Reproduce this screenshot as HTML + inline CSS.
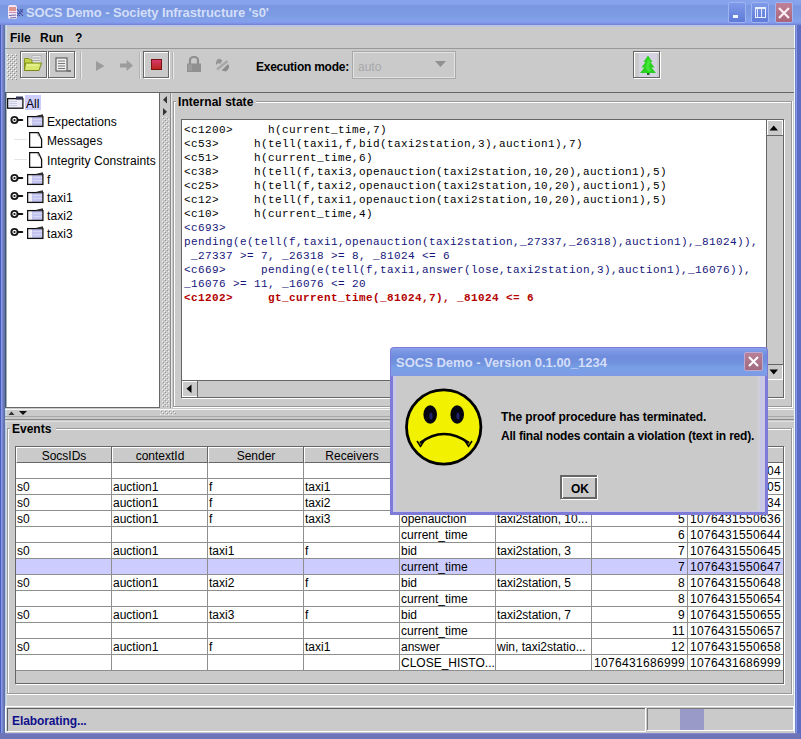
<!DOCTYPE html>
<html><head><meta charset="utf-8">
<style>
*{margin:0;padding:0;box-sizing:border-box}
html,body{width:801px;height:739px;overflow:hidden;background:#cacaca;font-family:"Liberation Sans",sans-serif;font-size:12px;color:#000;position:relative}
.a{position:absolute}
.t{line-height:14px;white-space:pre}
.b{font-weight:bold}
.m{font-family:"Liberation Mono",monospace;font-size:11px;line-height:14px;letter-spacing:0.4px;white-space:pre}
.title{left:26px;top:5px;font-weight:bold;font-size:13px;line-height:16px;color:#d4def8;letter-spacing:-0.1px;white-space:pre}
.dtitle{left:396px;top:355px;font-weight:bold;font-size:13px;line-height:16px;color:#d4def8;white-space:pre}
</style></head><body>
<div class="a" style="left:0;top:0;width:801px;height:25px;background:linear-gradient(#88a4ec 0px,#86a2ec 4px,#7a96e0 6px,#7b98e3 9px,#7b9be2 16px,#7fa0e6 18px,#869ff0 22px,#7a8ee0 24px,#6f80cc 25px)"></div>
<div class="a" style="left:0px;top:25px;width:801px;height:2px;background:#bcc4e6;"></div>
<div class="a" style="left:0px;top:25px;width:1px;height:714px;background:#4a5cbc;"></div>
<div class="a" style="left:1px;top:25px;width:1px;height:714px;background:#8898e8;"></div>
<div class="a" style="left:2px;top:25px;width:1px;height:714px;background:#7888d0;"></div>
<div class="a" style="left:3px;top:25px;width:1px;height:714px;background:#6a7ab8;"></div>
<div class="a" style="left:4px;top:25px;width:1px;height:714px;background:#6272a8;"></div>
<div class="a" style="left:5px;top:25px;width:1px;height:708px;background:#b8cce0;"></div>
<div class="a" style="left:6px;top:25px;width:1px;height:708px;background:#d0dce4;"></div>
<div class="a" style="left:794px;top:25px;width:1px;height:708px;background:#eef8ff;"></div>
<div class="a" style="left:795px;top:25px;width:1px;height:708px;background:#7080c8;"></div>
<div class="a" style="left:796px;top:25px;width:1px;height:714px;background:#8898e8;"></div>
<div class="a" style="left:797px;top:25px;width:4px;height:714px;background:#5a6cc4;"></div>
<div class="a" style="left:0px;top:733px;width:800px;height:6px;background:#6e74b8;"></div>
<div class="a" style="left:5px;top:733px;width:791px;height:1px;background:#8a86cc;"></div>
<svg class="a" style="left:6px;top:3px" width="20" height="19" viewBox="0 0 20 19">
<rect x="2" y="2" width="9" height="14" rx="2" fill="#f2e4f4"/>
<path d="M3 5 L10 5 M3 7 L10 7" stroke="#d87a70" stroke-width="1.4"/>
<path d="M3 9.5 L10 9.5" stroke="#c890b8" stroke-width="1"/>
<path d="M3 12.5 L10 12 M4 15 L10 14.5" stroke="#6a6aa8" stroke-width="1.2"/>
<path d="M11 6 L17 13 M17 6 L11 13 M14 6 L17 9.5 M11 9.5 L14 13" stroke="#48509a" stroke-width="1.1"/>
</svg>
<div class="a title">SOCS Demo - Society Infrastructure 's0'</div>
<div class="a" style="left:728px;top:2px;width:18px;height:21px;background:linear-gradient(#7f9ae8,#5f7ad8);border:1px solid #9fb4f0;border-radius:2px"></div>
<div class="a" style="left:751px;top:2px;width:18px;height:21px;background:linear-gradient(#7f9ae8,#5f7ad8);border:1px solid #9fb4f0;border-radius:2px"></div>
<div class="a" style="left:775px;top:2px;width:18px;height:21px;background:linear-gradient(#c08098,#a86478);border:1px solid #9fb4f0;border-radius:2px"></div>
<div class="a" style="left:733px;top:15px;width:5px;height:3px;background:#f0f4ff"></div>
<div class="a" style="left:755px;top:7px;width:11px;height:11px;border:1px solid #e8f0ff;border-top-width:2px"></div>
<div class="a" style="left:757px;top:9px;width:1px;height:8px;background:#dfe8ff"></div>
<div class="a" style="left:761px;top:9px;width:1px;height:8px;background:#dfe8ff"></div>
<svg class="a" style="left:775px;top:2px" width="18" height="21"><path d="M4 6 L14 16 M14 6 L4 16" stroke="#fbeef2" stroke-width="2.2"/></svg>
<div class="a t b" style="left:10px;top:31px;">File</div>
<div class="a t b" style="left:40px;top:31px;">Run</div>
<div class="a t b" style="left:75px;top:31px;">?</div>
<div class="a" style="left:5px;top:48px;width:790px;height:1px;background:#999999;"></div>
<svg class="a" style="left:7px;top:54px" width="10" height="26" shape-rendering="crispEdges"><defs><pattern id="bp1" width="4" height="4" patternUnits="userSpaceOnUse"><rect x="0" y="0" width="1" height="1" fill="#ffffff"/><rect x="2" y="2" width="1" height="1" fill="#ffffff"/><rect x="1" y="1" width="1" height="1" fill="#888888"/><rect x="3" y="3" width="1" height="1" fill="#888888"/></pattern></defs><rect width="10" height="26" fill="url(#bp1)"/></svg>
<div class="a" style="left:21px;top:52px;width:27px;height:1px;background:#ffffff;"></div>
<div class="a" style="left:21px;top:78px;width:27px;height:1px;background:#ffffff;"></div>
<div class="a" style="left:21px;top:52px;width:1px;height:27px;background:#ffffff;"></div>
<div class="a" style="left:47px;top:52px;width:1px;height:27px;background:#ffffff;"></div>
<div class="a" style="left:20px;top:51px;width:27px;height:1px;background:#666666;"></div>
<div class="a" style="left:20px;top:77px;width:27px;height:1px;background:#666666;"></div>
<div class="a" style="left:20px;top:51px;width:1px;height:27px;background:#666666;"></div>
<div class="a" style="left:46px;top:51px;width:1px;height:27px;background:#666666;"></div>
<div class="a" style="left:49px;top:52px;width:27px;height:1px;background:#ffffff;"></div>
<div class="a" style="left:49px;top:78px;width:27px;height:1px;background:#ffffff;"></div>
<div class="a" style="left:49px;top:52px;width:1px;height:27px;background:#ffffff;"></div>
<div class="a" style="left:75px;top:52px;width:1px;height:27px;background:#ffffff;"></div>
<div class="a" style="left:48px;top:51px;width:27px;height:1px;background:#666666;"></div>
<div class="a" style="left:48px;top:77px;width:27px;height:1px;background:#666666;"></div>
<div class="a" style="left:48px;top:51px;width:1px;height:27px;background:#666666;"></div>
<div class="a" style="left:74px;top:51px;width:1px;height:27px;background:#666666;"></div>
<div class="a" style="left:144px;top:52px;width:26px;height:1px;background:#ffffff;"></div>
<div class="a" style="left:144px;top:78px;width:26px;height:1px;background:#ffffff;"></div>
<div class="a" style="left:144px;top:52px;width:1px;height:27px;background:#ffffff;"></div>
<div class="a" style="left:169px;top:52px;width:1px;height:27px;background:#ffffff;"></div>
<div class="a" style="left:143px;top:51px;width:26px;height:1px;background:#666666;"></div>
<div class="a" style="left:143px;top:77px;width:26px;height:1px;background:#666666;"></div>
<div class="a" style="left:143px;top:51px;width:1px;height:27px;background:#666666;"></div>
<div class="a" style="left:168px;top:51px;width:1px;height:27px;background:#666666;"></div>
<div class="a" style="left:634px;top:52px;width:27px;height:1px;background:#ffffff;"></div>
<div class="a" style="left:634px;top:78px;width:27px;height:1px;background:#ffffff;"></div>
<div class="a" style="left:634px;top:52px;width:1px;height:27px;background:#ffffff;"></div>
<div class="a" style="left:660px;top:52px;width:1px;height:27px;background:#ffffff;"></div>
<div class="a" style="left:633px;top:51px;width:27px;height:1px;background:#666666;"></div>
<div class="a" style="left:633px;top:77px;width:27px;height:1px;background:#666666;"></div>
<div class="a" style="left:633px;top:51px;width:1px;height:27px;background:#666666;"></div>
<div class="a" style="left:659px;top:51px;width:1px;height:27px;background:#666666;"></div>
<div class="a" style="left:80px;top:52px;width:1px;height:27px;background:#b4b4b4;"></div>
<div class="a" style="left:81px;top:52px;width:1px;height:27px;background:#e8e8e8;"></div>
<div class="a" style="left:139px;top:52px;width:1px;height:27px;background:#b4b4b4;"></div>
<div class="a" style="left:140px;top:52px;width:1px;height:27px;background:#e8e8e8;"></div>
<div class="a" style="left:172px;top:52px;width:1px;height:27px;background:#b4b4b4;"></div>
<div class="a" style="left:173px;top:52px;width:1px;height:27px;background:#e8e8e8;"></div>
<svg class="a" style="left:22px;top:53px" width="24" height="24" viewBox="0 0 24 24">
<rect x="10" y="2.5" width="9" height="8" fill="#e4e4e4" stroke="#b0b0b0" stroke-width="0.8"/>
<path d="M11 5 L18 5 M11 7.5 L18 7.5" stroke="#a8a8a8" stroke-width="1"/>
<path d="M2.5 5.5 L7 5.5 L8.5 7 L10 7 L10 17.5 L2.5 17.5Z" fill="#c4d448" stroke="#88981c" stroke-width="1"/>
<path d="M3.5 10 L19.5 10 L17 17.5 L2.5 17.5Z" fill="#d8e870" stroke="#7a8a14" stroke-width="1"/>
<path d="M5 12 L16 12" stroke="#eef8a0" stroke-width="1.2"/>
</svg>
<svg class="a" style="left:50px;top:53px" width="24" height="24" viewBox="0 0 24 24">
<rect x="6" y="5" width="11" height="13" fill="#efefef" stroke="#4a4a4a" stroke-width="1"/>
<path d="M8 8 L15 8 M8 10.5 L15 10.5 M8 13 L15 13 M8 15.5 L15 15.5" stroke="#777" stroke-width="1"/>
<path d="M17 17 L21 17 L21 19 L17 19Z" fill="#777"/>
</svg>
<svg class="a" style="left:88px;top:53px" width="24" height="24" viewBox="0 0 24 24">
<path d="M8 8 L16.5 13 L8 18Z" fill="#9c9c9c"/></svg>
<svg class="a" style="left:114px;top:53px" width="24" height="24" viewBox="0 0 24 24">
<path d="M6 10.5 L12.5 10.5 L12.5 7 L19 12.5 L12.5 18 L12.5 14.5 L6 14.5Z" fill="#9c9c9c"/></svg>
<svg class="a" style="left:145px;top:53px" width="24" height="24" viewBox="0 0 24 24">
<defs><linearGradient id="sg" x1="0" y1="0" x2="0" y2="1"><stop offset="0" stop-color="#d83a70"/><stop offset="1" stop-color="#b82418"/></linearGradient></defs>
<rect x="6.5" y="6.5" width="10" height="10" fill="url(#sg)" stroke="#7a1010" stroke-width="1"/></svg>
<svg class="a" style="left:181px;top:53px" width="26" height="24" viewBox="0 0 26 24">
<path d="M9 11 L9 7.5 Q9 4 13 4 Q17 4 17 7.5 L17 11" fill="none" stroke="#8e8e8e" stroke-width="2.2"/>
<rect x="6" y="10.5" width="14" height="8.5" fill="#909090"/>
<rect x="7" y="11.5" width="4" height="6.5" fill="#9c9c9c"/></svg>
<svg class="a" style="left:208px;top:53px" width="26" height="24" viewBox="0 0 26 24">
<path d="M8 9 Q10 3.5 14.5 7.5 L12 11 Q10 9 8 12Z" fill="#959595"/>
<path d="M9 16.5 L19.5 8" stroke="#a8a8a8" stroke-width="2.5"/>
<path d="M13.5 17.5 L20 11 Q23 14.5 18 18.5Z" fill="#8c8c8c"/></svg>
<div class="a t b" style="left:256px;top:60px;letter-spacing:-0.25px">Execution mode:</div>
<div class="a" style="left:352px;top:51px;width:104px;height:1px;background:#a9a9a9;"></div>
<div class="a" style="left:352px;top:78px;width:104px;height:1px;background:#a9a9a9;"></div>
<div class="a" style="left:352px;top:51px;width:1px;height:28px;background:#a9a9a9;"></div>
<div class="a" style="left:455px;top:51px;width:1px;height:28px;background:#a9a9a9;"></div>
<div class="a" style="left:353px;top:52px;width:102px;height:1px;background:#e2e2e2;"></div>
<div class="a" style="left:353px;top:77px;width:102px;height:1px;background:#e2e2e2;"></div>
<div class="a" style="left:353px;top:52px;width:1px;height:26px;background:#e2e2e2;"></div>
<div class="a" style="left:454px;top:52px;width:1px;height:26px;background:#e2e2e2;"></div>
<div class="a t " style="left:358px;top:60px;color:#a8a8a8">auto</div>
<svg class="a" style="left:434px;top:60px" width="14" height="8"><path d="M1 1 L12 1 L6.5 7Z" fill="#909090"/></svg>
<div class="a" style="left:639px;top:53px;width:18px;height:24px;background:#d6d2e2;"></div>
<svg class="a" style="left:638px;top:54px" width="20" height="22" viewBox="0 0 20 22">
<path d="M10 1.5 L14.5 8 L12.5 8 L16.5 13.5 L13.5 13.5 L18 19 L2 19 L6.5 13.5 L3.5 13.5 L7.5 8 L5.5 8Z" fill="#28d020"/>
<path d="M10 4 L12.5 8 L11 12 L13 17 L10 18 L7.5 13 Z" fill="#4cf040" opacity="0.7"/>
<rect x="9" y="19" width="2.5" height="2" fill="#1a6a1a"/></svg>
<div class="a" style="left:5px;top:92px;width:789px;height:1px;background:#666666;"></div>
<div class="a" style="left:6px;top:93px;width:153px;height:314px;background:#ffffff;"></div>
<div class="a" style="left:5px;top:92px;width:1px;height:316px;background:#44586e;"></div>
<div class="a" style="left:6px;top:93px;width:1px;height:314px;background:#a0b0b8;"></div>
<div class="a" style="left:159px;top:92px;width:1px;height:316px;background:#666666;"></div>
<div class="a" style="left:5px;top:407px;width:155px;height:1px;background:#666666;"></div>
<svg class="a" style="left:162px;top:117px" width="7" height="290" shape-rendering="crispEdges"><defs><pattern id="bp2" width="4" height="4" patternUnits="userSpaceOnUse"><rect x="0" y="0" width="1" height="1" fill="#f4f4f4"/><rect x="2" y="2" width="1" height="1" fill="#f4f4f4"/><rect x="1" y="1" width="1" height="1" fill="#959595"/><rect x="3" y="3" width="1" height="1" fill="#959595"/></pattern></defs><rect width="7" height="290" fill="url(#bp2)"/></svg>
<svg class="a" style="left:160px;top:410px" width="16" height="5" shape-rendering="crispEdges"><defs><pattern id="bp3" width="4" height="4" patternUnits="userSpaceOnUse"><rect x="0" y="0" width="1" height="1" fill="#f4f4f4"/><rect x="2" y="2" width="1" height="1" fill="#f4f4f4"/><rect x="1" y="1" width="1" height="1" fill="#959595"/><rect x="3" y="3" width="1" height="1" fill="#959595"/></pattern></defs><rect width="16" height="5" fill="url(#bp3)"/></svg>
<svg class="a" style="left:161px;top:95px" width="8" height="22"><path d="M6 1 L6 8.5 L2 4.75Z" fill="#333"/><path d="M2 13 L2 20.5 L6 16.75Z" fill="#333"/></svg>
<div class="a" style="left:170px;top:93px;width:1px;height:315px;background:#8c8c8c;"></div>
<div class="a" style="left:171px;top:93px;width:1px;height:315px;background:#e8e8e8;"></div>
<div class="a" style="left:25px;top:95px;width:16px;height:15px;background:#ccccff;"></div>
<svg class="a" style="left:7px;top:96px" width="17" height="14" viewBox="0 0 17 14">
<rect x="1" y="2.5" width="14.5" height="9.5" fill="#ececf8"/>
<path d="M2 5.5 L10 5.5 M2 7.5 L10 7.5 M2 9.5 L10 9.5" stroke="#c4c4dc" stroke-width="0.8"/>
<rect x="0.6" y="2.6" width="15.3" height="9.6" fill="none" stroke="#111" stroke-width="1.3"/>
<rect x="9" y="0.5" width="7" height="3" fill="#333355"/>
</svg>
<div class="a t " style="left:26px;top:97px;">All</div>
<svg class="a" style="left:10px;top:115px" width="14" height="10" viewBox="0 0 14 10">
<circle cx="4.5" cy="5" r="3.1" fill="#fff" stroke="#1a1a1a" stroke-width="1.9"/>
<circle cx="4.5" cy="5" r="1.1" fill="#111"/>
<path d="M8 5 L12.2 5" stroke="#111" stroke-width="2.2" stroke-linecap="round"/>
</svg>
<svg class="a" style="left:27px;top:114px" width="17" height="14" viewBox="0 0 17 14">
<rect x="1" y="2.5" width="4" height="9.5" fill="#f0f0f8"/>
<rect x="5" y="2.5" width="10.5" height="9.5" fill="#c4c4f0"/>
<path d="M6 5.5 L15 5.5 M6 8.5 L15 8.5" stroke="#dcdcf8" stroke-width="0.8"/>
<rect x="0.6" y="2.6" width="15.3" height="9.8" fill="none" stroke="#111" stroke-width="1.3"/>
<path d="M9 2.5 L15.5 0.8 L15.5 2.5" fill="#555" stroke="#222" stroke-width="1"/>
</svg>
<div class="a t " style="left:47px;top:115px;letter-spacing:0.1px">Expectations</div>
<div class="a" style="left:14px;top:139px;width:13px;height:1px;background:#e4e4e4;"></div>
<svg class="a" style="left:29px;top:132px" width="14" height="17" viewBox="0 0 14 17">
<path d="M0.6 0.6 L9.4 0.6 L12.6 7.5 L12.6 15.4 L0.6 15.4Z" fill="#fff" stroke="#111" stroke-width="1.3"/>
<path d="M8.5 1.5 L9.5 4 L11 4.5" fill="none" stroke="#999" stroke-width="1"/>
</svg>
<div class="a t " style="left:47px;top:134px;letter-spacing:0.1px">Messages</div>
<div class="a" style="left:14px;top:159px;width:13px;height:1px;background:#e4e4e4;"></div>
<svg class="a" style="left:29px;top:152px" width="14" height="17" viewBox="0 0 14 17">
<path d="M0.6 0.6 L9.4 0.6 L12.6 7.5 L12.6 15.4 L0.6 15.4Z" fill="#fff" stroke="#111" stroke-width="1.3"/>
<path d="M8.5 1.5 L9.5 4 L11 4.5" fill="none" stroke="#999" stroke-width="1"/>
</svg>
<div class="a t " style="left:47px;top:154px;letter-spacing:0.1px">Integrity Constraints</div>
<svg class="a" style="left:10px;top:173px" width="14" height="10" viewBox="0 0 14 10">
<circle cx="4.5" cy="5" r="3.1" fill="#fff" stroke="#1a1a1a" stroke-width="1.9"/>
<circle cx="4.5" cy="5" r="1.1" fill="#111"/>
<path d="M8 5 L12.2 5" stroke="#111" stroke-width="2.2" stroke-linecap="round"/>
</svg>
<svg class="a" style="left:27px;top:172px" width="17" height="14" viewBox="0 0 17 14">
<rect x="1" y="2.5" width="4" height="9.5" fill="#f0f0f8"/>
<rect x="5" y="2.5" width="10.5" height="9.5" fill="#c4c4f0"/>
<path d="M6 5.5 L15 5.5 M6 8.5 L15 8.5" stroke="#dcdcf8" stroke-width="0.8"/>
<rect x="0.6" y="2.6" width="15.3" height="9.8" fill="none" stroke="#111" stroke-width="1.3"/>
<path d="M9 2.5 L15.5 0.8 L15.5 2.5" fill="#555" stroke="#222" stroke-width="1"/>
</svg>
<div class="a t " style="left:47px;top:173px;letter-spacing:0.1px">f</div>
<svg class="a" style="left:10px;top:191px" width="14" height="10" viewBox="0 0 14 10">
<circle cx="4.5" cy="5" r="3.1" fill="#fff" stroke="#1a1a1a" stroke-width="1.9"/>
<circle cx="4.5" cy="5" r="1.1" fill="#111"/>
<path d="M8 5 L12.2 5" stroke="#111" stroke-width="2.2" stroke-linecap="round"/>
</svg>
<svg class="a" style="left:27px;top:190px" width="17" height="14" viewBox="0 0 17 14">
<rect x="1" y="2.5" width="4" height="9.5" fill="#f0f0f8"/>
<rect x="5" y="2.5" width="10.5" height="9.5" fill="#c4c4f0"/>
<path d="M6 5.5 L15 5.5 M6 8.5 L15 8.5" stroke="#dcdcf8" stroke-width="0.8"/>
<rect x="0.6" y="2.6" width="15.3" height="9.8" fill="none" stroke="#111" stroke-width="1.3"/>
<path d="M9 2.5 L15.5 0.8 L15.5 2.5" fill="#555" stroke="#222" stroke-width="1"/>
</svg>
<div class="a t " style="left:47px;top:191px;letter-spacing:0.1px">taxi1</div>
<svg class="a" style="left:10px;top:209px" width="14" height="10" viewBox="0 0 14 10">
<circle cx="4.5" cy="5" r="3.1" fill="#fff" stroke="#1a1a1a" stroke-width="1.9"/>
<circle cx="4.5" cy="5" r="1.1" fill="#111"/>
<path d="M8 5 L12.2 5" stroke="#111" stroke-width="2.2" stroke-linecap="round"/>
</svg>
<svg class="a" style="left:27px;top:208px" width="17" height="14" viewBox="0 0 17 14">
<rect x="1" y="2.5" width="4" height="9.5" fill="#f0f0f8"/>
<rect x="5" y="2.5" width="10.5" height="9.5" fill="#c4c4f0"/>
<path d="M6 5.5 L15 5.5 M6 8.5 L15 8.5" stroke="#dcdcf8" stroke-width="0.8"/>
<rect x="0.6" y="2.6" width="15.3" height="9.8" fill="none" stroke="#111" stroke-width="1.3"/>
<path d="M9 2.5 L15.5 0.8 L15.5 2.5" fill="#555" stroke="#222" stroke-width="1"/>
</svg>
<div class="a t " style="left:47px;top:209px;letter-spacing:0.1px">taxi2</div>
<svg class="a" style="left:10px;top:227px" width="14" height="10" viewBox="0 0 14 10">
<circle cx="4.5" cy="5" r="3.1" fill="#fff" stroke="#1a1a1a" stroke-width="1.9"/>
<circle cx="4.5" cy="5" r="1.1" fill="#111"/>
<path d="M8 5 L12.2 5" stroke="#111" stroke-width="2.2" stroke-linecap="round"/>
</svg>
<svg class="a" style="left:27px;top:226px" width="17" height="14" viewBox="0 0 17 14">
<rect x="1" y="2.5" width="4" height="9.5" fill="#f0f0f8"/>
<rect x="5" y="2.5" width="10.5" height="9.5" fill="#c4c4f0"/>
<path d="M6 5.5 L15 5.5 M6 8.5 L15 8.5" stroke="#dcdcf8" stroke-width="0.8"/>
<rect x="0.6" y="2.6" width="15.3" height="9.8" fill="none" stroke="#111" stroke-width="1.3"/>
<path d="M9 2.5 L15.5 0.8 L15.5 2.5" fill="#555" stroke="#222" stroke-width="1"/>
</svg>
<div class="a t " style="left:47px;top:227px;letter-spacing:0.1px">taxi3</div>
<div class="a" style="left:173px;top:101px;width:619px;height:1px;background:#999999;"></div>
<div class="a" style="left:174px;top:102px;width:617px;height:1px;background:#ffffff;"></div>
<div class="a" style="left:173px;top:101px;width:1px;height:306px;background:#999999;"></div>
<div class="a" style="left:174px;top:102px;width:1px;height:304px;background:#ffffff;"></div>
<div class="a" style="left:173px;top:406px;width:619px;height:1px;background:#999999;"></div>
<div class="a" style="left:173px;top:407px;width:620px;height:1px;background:#ffffff;"></div>
<div class="a" style="left:791px;top:101px;width:1px;height:306px;background:#999999;"></div>
<div class="a" style="left:792px;top:101px;width:1px;height:307px;background:#ffffff;"></div>
<div class="a" style="left:176px;top:96px;width:80px;height:12px;background:#cacaca;"></div>
<div class="a t b" style="left:178px;top:95px;letter-spacing:0.05px">Internal state</div>
<div class="a" style="left:182px;top:120px;width:584px;height:260px;background:#ffffff;"></div>
<div class="a" style="left:181px;top:119px;width:603px;height:1px;background:#666666;"></div>
<div class="a" style="left:181px;top:397px;width:603px;height:1px;background:#666666;"></div>
<div class="a" style="left:181px;top:119px;width:1px;height:279px;background:#666666;"></div>
<div class="a" style="left:783px;top:119px;width:1px;height:279px;background:#666666;"></div>
<div class="a" style="left:182px;top:398px;width:603px;height:1px;background:#ffffff;"></div>
<div class="a" style="left:784px;top:120px;width:1px;height:279px;background:#ffffff;"></div>
<div class="a" style="left:766px;top:120px;width:17px;height:260px;background:#cacaca;"></div>
<div class="a" style="left:766px;top:120px;width:1px;height:260px;background:#666666;"></div>
<div class="a" style="left:767px;top:120px;width:16px;height:1px;background:#ffffff;"></div>
<div class="a" style="left:767px;top:135px;width:16px;height:1px;background:#ffffff;"></div>
<div class="a" style="left:767px;top:120px;width:1px;height:16px;background:#ffffff;"></div>
<div class="a" style="left:782px;top:120px;width:1px;height:16px;background:#ffffff;"></div>
<div class="a" style="left:767px;top:135px;width:16px;height:1px;background:#666666;"></div>
<svg class="a" style="left:769px;top:125px" width="10" height="6"><path d="M0.5 5.5 L9 5.5 L4.75 0.5Z" fill="#000"/></svg>
<div class="a" style="left:767px;top:364px;width:16px;height:1px;background:#ffffff;"></div>
<div class="a" style="left:767px;top:379px;width:16px;height:1px;background:#ffffff;"></div>
<div class="a" style="left:767px;top:364px;width:1px;height:16px;background:#ffffff;"></div>
<div class="a" style="left:782px;top:364px;width:1px;height:16px;background:#ffffff;"></div>
<div class="a" style="left:767px;top:364px;width:16px;height:1px;background:#666666;"></div>
<svg class="a" style="left:769px;top:369px" width="10" height="6"><path d="M0.5 0.5 L9 0.5 L4.75 5.5Z" fill="#000"/></svg>
<div class="a" style="left:182px;top:380px;width:584px;height:17px;background:#cacaca;"></div>
<div class="a" style="left:182px;top:380px;width:584px;height:1px;background:#666666;"></div>
<div class="a" style="left:182px;top:381px;width:16px;height:1px;background:#ffffff;"></div>
<div class="a" style="left:182px;top:396px;width:16px;height:1px;background:#ffffff;"></div>
<div class="a" style="left:182px;top:381px;width:1px;height:16px;background:#ffffff;"></div>
<div class="a" style="left:197px;top:381px;width:1px;height:16px;background:#ffffff;"></div>
<div class="a" style="left:197px;top:381px;width:1px;height:16px;background:#666666;"></div>
<svg class="a" style="left:186px;top:384px" width="6" height="10"><path d="M5.5 0.5 L5.5 9 L0.5 4.75Z" fill="#000"/></svg>
<div class="a m" style="left:184px;top:123px;color:#000000">&lt;c1200&gt;     h(current_time,7)</div>
<div class="a m" style="left:184px;top:137px;color:#000000">&lt;c53&gt;     h(tell(taxi1,f,bid(taxi2station,3),auction1),7)</div>
<div class="a m" style="left:184px;top:151px;color:#000000">&lt;c51&gt;     h(current_time,6)</div>
<div class="a m" style="left:184px;top:165px;color:#000000">&lt;c38&gt;     h(tell(f,taxi3,openauction(taxi2station,10,20),auction1),5)</div>
<div class="a m" style="left:184px;top:179px;color:#000000">&lt;c25&gt;     h(tell(f,taxi2,openauction(taxi2station,10,20),auction1),5)</div>
<div class="a m" style="left:184px;top:193px;color:#000000">&lt;c12&gt;     h(tell(f,taxi1,openauction(taxi2station,10,20),auction1),5)</div>
<div class="a m" style="left:184px;top:207px;color:#000000">&lt;c10&gt;     h(current_time,4)</div>
<div class="a m" style="left:184px;top:221px;color:#14147a">&lt;c693&gt;</div>
<div class="a m" style="left:184px;top:235px;color:#14147a">pending(e(tell(f,taxi1,openauction(taxi2station,_27337,_26318),auction1),_81024)),</div>
<div class="a m" style="left:184px;top:249px;color:#14147a"> _27337 &gt;= 7, _26318 &gt;= 8, _81024 &lt;= 6</div>
<div class="a m" style="left:184px;top:263px;color:#14147a">&lt;c669&gt;     pending(e(tell(f,taxi1,answer(lose,taxi2station,3),auction1),_16076)),</div>
<div class="a m" style="left:184px;top:277px;color:#14147a">_16076 &gt;= 11, _16076 &lt;= 20</div>
<div class="a m" style="left:184px;top:291px;color:#b40000;font-weight:bold">&lt;c1202&gt;     gt_current_time(_81024,7), _81024 &lt;= 6</div>
<svg class="a" style="left:7px;top:409px" width="24" height="8"><path d="M1.5 6 L7.5 6 L4.5 2.5Z" fill="#333"/><path d="M12 2 L20 2 L16 6Z" fill="#111"/></svg>
<div class="a" style="left:5px;top:409px;width:789px;height:1px;background:#f4f4f4;"></div>
<div class="a" style="left:5px;top:416px;width:789px;height:1px;background:#a8a8a8;"></div>
<div class="a" style="left:5px;top:419px;width:789px;height:1px;background:#888888;"></div>
<div class="a" style="left:5px;top:421px;width:789px;height:1px;background:#e0e0e0;"></div>
<div class="a" style="left:7px;top:428px;width:785px;height:1px;background:#999999;"></div>
<div class="a" style="left:8px;top:429px;width:783px;height:1px;background:#ffffff;"></div>
<div class="a" style="left:7px;top:428px;width:1px;height:266px;background:#999999;"></div>
<div class="a" style="left:8px;top:429px;width:1px;height:264px;background:#ffffff;"></div>
<div class="a" style="left:7px;top:693px;width:785px;height:1px;background:#999999;"></div>
<div class="a" style="left:7px;top:694px;width:786px;height:1px;background:#ffffff;"></div>
<div class="a" style="left:791px;top:428px;width:1px;height:266px;background:#999999;"></div>
<div class="a" style="left:792px;top:428px;width:1px;height:267px;background:#ffffff;"></div>
<div class="a" style="left:10px;top:423px;width:46px;height:12px;background:#cacaca;"></div>
<div class="a t b" style="left:12px;top:422px;">Events</div>
<div class="a" style="left:15px;top:446px;width:769px;height:1px;background:#666666;"></div>
<div class="a" style="left:15px;top:683px;width:769px;height:1px;background:#666666;"></div>
<div class="a" style="left:15px;top:446px;width:1px;height:238px;background:#666666;"></div>
<div class="a" style="left:783px;top:446px;width:1px;height:238px;background:#666666;"></div>
<div class="a" style="left:16px;top:684px;width:769px;height:1px;background:#ffffff;"></div>
<div class="a" style="left:784px;top:447px;width:1px;height:238px;background:#ffffff;"></div>
<div class="a" style="left:16px;top:447px;width:767px;height:16px;background:#cacaca;"></div>
<div class="a" style="left:16px;top:447px;width:95px;height:1px;background:#ffffff;"></div>
<div class="a" style="left:16px;top:447px;width:1px;height:15px;background:#ffffff;"></div>
<div class="a" style="left:111px;top:447px;width:1px;height:16px;background:#666666;"></div>
<div class="a" style="left:17px;top:462px;width:95px;height:1px;background:#666666;"></div>
<div class="a" style="left:112px;top:447px;width:95px;height:1px;background:#ffffff;"></div>
<div class="a" style="left:112px;top:447px;width:1px;height:15px;background:#ffffff;"></div>
<div class="a" style="left:207px;top:447px;width:1px;height:16px;background:#666666;"></div>
<div class="a" style="left:113px;top:462px;width:95px;height:1px;background:#666666;"></div>
<div class="a" style="left:208px;top:447px;width:95px;height:1px;background:#ffffff;"></div>
<div class="a" style="left:208px;top:447px;width:1px;height:15px;background:#ffffff;"></div>
<div class="a" style="left:303px;top:447px;width:1px;height:16px;background:#666666;"></div>
<div class="a" style="left:209px;top:462px;width:95px;height:1px;background:#666666;"></div>
<div class="a" style="left:304px;top:447px;width:95px;height:1px;background:#ffffff;"></div>
<div class="a" style="left:304px;top:447px;width:1px;height:15px;background:#ffffff;"></div>
<div class="a" style="left:399px;top:447px;width:1px;height:16px;background:#666666;"></div>
<div class="a" style="left:305px;top:462px;width:95px;height:1px;background:#666666;"></div>
<div class="a" style="left:400px;top:447px;width:95px;height:1px;background:#ffffff;"></div>
<div class="a" style="left:400px;top:447px;width:1px;height:15px;background:#ffffff;"></div>
<div class="a" style="left:495px;top:447px;width:1px;height:16px;background:#666666;"></div>
<div class="a" style="left:401px;top:462px;width:95px;height:1px;background:#666666;"></div>
<div class="a" style="left:496px;top:447px;width:95px;height:1px;background:#ffffff;"></div>
<div class="a" style="left:496px;top:447px;width:1px;height:15px;background:#ffffff;"></div>
<div class="a" style="left:591px;top:447px;width:1px;height:16px;background:#666666;"></div>
<div class="a" style="left:497px;top:462px;width:95px;height:1px;background:#666666;"></div>
<div class="a" style="left:592px;top:447px;width:95px;height:1px;background:#ffffff;"></div>
<div class="a" style="left:592px;top:447px;width:1px;height:15px;background:#ffffff;"></div>
<div class="a" style="left:687px;top:447px;width:1px;height:16px;background:#666666;"></div>
<div class="a" style="left:593px;top:462px;width:95px;height:1px;background:#666666;"></div>
<div class="a" style="left:688px;top:447px;width:95px;height:1px;background:#ffffff;"></div>
<div class="a" style="left:688px;top:447px;width:1px;height:15px;background:#ffffff;"></div>
<div class="a" style="left:783px;top:447px;width:1px;height:16px;background:#666666;"></div>
<div class="a" style="left:689px;top:462px;width:95px;height:1px;background:#666666;"></div>
<div class="a t" style="left:16px;top:449px;width:96px;text-align:center">SocsIDs</div>
<div class="a t" style="left:112px;top:449px;width:96px;text-align:center">contextId</div>
<div class="a t" style="left:208px;top:449px;width:96px;text-align:center">Sender</div>
<div class="a t" style="left:304px;top:449px;width:96px;text-align:center">Receivers</div>
<div class="a t" style="left:400px;top:449px;width:96px;text-align:center">Content</div>
<div class="a t" style="left:496px;top:449px;width:96px;text-align:center">Args</div>
<div class="a t" style="left:592px;top:449px;width:96px;text-align:center">Time</div>
<div class="a t" style="left:688px;top:449px;width:96px;text-align:center">Timestamp</div>
<div class="a" style="left:16px;top:463px;width:767px;height:220px;background:#cacaca;"></div>
<div class="a" style="left:16px;top:463px;width:767px;height:208px;background:#ffffff;"></div>
<div class="a t" style="left:688px;top:464px;width:93px;text-align:right;letter-spacing:0.33px">1076431550604</div>
<div class="a t " style="left:17px;top:480px;">s0</div>
<div class="a t " style="left:113px;top:480px;">auction1</div>
<div class="a t " style="left:209px;top:480px;">f</div>
<div class="a t " style="left:305px;top:480px;">taxi1</div>
<div class="a t " style="left:401px;top:480px;">openauction</div>
<div class="a t " style="left:497px;top:480px;">taxi2station, 10...</div>
<div class="a t" style="left:592px;top:480px;width:93px;text-align:right;letter-spacing:0.33px">5</div>
<div class="a t" style="left:688px;top:480px;width:93px;text-align:right;letter-spacing:0.33px">1076431550605</div>
<div class="a t " style="left:17px;top:496px;">s0</div>
<div class="a t " style="left:113px;top:496px;">auction1</div>
<div class="a t " style="left:209px;top:496px;">f</div>
<div class="a t " style="left:305px;top:496px;">taxi2</div>
<div class="a t " style="left:401px;top:496px;">openauction</div>
<div class="a t " style="left:497px;top:496px;">taxi2station, 10...</div>
<div class="a t" style="left:592px;top:496px;width:93px;text-align:right;letter-spacing:0.33px">5</div>
<div class="a t" style="left:688px;top:496px;width:93px;text-align:right;letter-spacing:0.33px">1076431550634</div>
<div class="a t " style="left:17px;top:512px;">s0</div>
<div class="a t " style="left:113px;top:512px;">auction1</div>
<div class="a t " style="left:209px;top:512px;">f</div>
<div class="a t " style="left:305px;top:512px;">taxi3</div>
<div class="a t " style="left:401px;top:512px;">openauction</div>
<div class="a t " style="left:497px;top:512px;">taxi2station, 10...</div>
<div class="a t" style="left:592px;top:512px;width:93px;text-align:right;letter-spacing:0.33px">5</div>
<div class="a t" style="left:688px;top:512px;width:93px;text-align:right;letter-spacing:0.33px">1076431550636</div>
<div class="a t " style="left:401px;top:528px;">current_time</div>
<div class="a t" style="left:592px;top:528px;width:93px;text-align:right;letter-spacing:0.33px">6</div>
<div class="a t" style="left:688px;top:528px;width:93px;text-align:right;letter-spacing:0.33px">1076431550644</div>
<div class="a t " style="left:17px;top:544px;">s0</div>
<div class="a t " style="left:113px;top:544px;">auction1</div>
<div class="a t " style="left:209px;top:544px;">taxi1</div>
<div class="a t " style="left:305px;top:544px;">f</div>
<div class="a t " style="left:401px;top:544px;">bid</div>
<div class="a t " style="left:497px;top:544px;">taxi2station, 3</div>
<div class="a t" style="left:592px;top:544px;width:93px;text-align:right;letter-spacing:0.33px">7</div>
<div class="a t" style="left:688px;top:544px;width:93px;text-align:right;letter-spacing:0.33px">1076431550645</div>
<div class="a" style="left:16px;top:559px;width:767px;height:15px;background:#ccccff;"></div>
<div class="a t " style="left:401px;top:560px;">current_time</div>
<div class="a t" style="left:592px;top:560px;width:93px;text-align:right;letter-spacing:0.33px">7</div>
<div class="a t" style="left:688px;top:560px;width:93px;text-align:right;letter-spacing:0.33px">1076431550647</div>
<div class="a t " style="left:17px;top:576px;">s0</div>
<div class="a t " style="left:113px;top:576px;">auction1</div>
<div class="a t " style="left:209px;top:576px;">taxi2</div>
<div class="a t " style="left:305px;top:576px;">f</div>
<div class="a t " style="left:401px;top:576px;">bid</div>
<div class="a t " style="left:497px;top:576px;">taxi2station, 5</div>
<div class="a t" style="left:592px;top:576px;width:93px;text-align:right;letter-spacing:0.33px">8</div>
<div class="a t" style="left:688px;top:576px;width:93px;text-align:right;letter-spacing:0.33px">1076431550648</div>
<div class="a t " style="left:401px;top:592px;">current_time</div>
<div class="a t" style="left:592px;top:592px;width:93px;text-align:right;letter-spacing:0.33px">8</div>
<div class="a t" style="left:688px;top:592px;width:93px;text-align:right;letter-spacing:0.33px">1076431550654</div>
<div class="a t " style="left:17px;top:608px;">s0</div>
<div class="a t " style="left:113px;top:608px;">auction1</div>
<div class="a t " style="left:209px;top:608px;">taxi3</div>
<div class="a t " style="left:305px;top:608px;">f</div>
<div class="a t " style="left:401px;top:608px;">bid</div>
<div class="a t " style="left:497px;top:608px;">taxi2station, 7</div>
<div class="a t" style="left:592px;top:608px;width:93px;text-align:right;letter-spacing:0.33px">9</div>
<div class="a t" style="left:688px;top:608px;width:93px;text-align:right;letter-spacing:0.33px">1076431550655</div>
<div class="a t " style="left:401px;top:624px;">current_time</div>
<div class="a t" style="left:592px;top:624px;width:93px;text-align:right;letter-spacing:0.33px">11</div>
<div class="a t" style="left:688px;top:624px;width:93px;text-align:right;letter-spacing:0.33px">1076431550657</div>
<div class="a t " style="left:17px;top:640px;">s0</div>
<div class="a t " style="left:113px;top:640px;">auction1</div>
<div class="a t " style="left:209px;top:640px;">f</div>
<div class="a t " style="left:305px;top:640px;">taxi1</div>
<div class="a t " style="left:401px;top:640px;">answer</div>
<div class="a t " style="left:497px;top:640px;">win, taxi2statio...</div>
<div class="a t" style="left:592px;top:640px;width:93px;text-align:right;letter-spacing:0.33px">12</div>
<div class="a t" style="left:688px;top:640px;width:93px;text-align:right;letter-spacing:0.33px">1076431550658</div>
<div class="a t " style="left:401px;top:656px;">CLOSE_HISTO...</div>
<div class="a t" style="left:592px;top:656px;width:93px;text-align:right;letter-spacing:0.33px">1076431686999</div>
<div class="a t" style="left:688px;top:656px;width:93px;text-align:right;letter-spacing:0.33px">1076431686999</div>
<div class="a" style="left:16px;top:478px;width:767px;height:1px;background:#8e8e8e;"></div>
<div class="a" style="left:16px;top:494px;width:767px;height:1px;background:#8e8e8e;"></div>
<div class="a" style="left:16px;top:510px;width:767px;height:1px;background:#8e8e8e;"></div>
<div class="a" style="left:16px;top:526px;width:767px;height:1px;background:#8e8e8e;"></div>
<div class="a" style="left:16px;top:542px;width:767px;height:1px;background:#8e8e8e;"></div>
<div class="a" style="left:16px;top:558px;width:767px;height:1px;background:#8e8e8e;"></div>
<div class="a" style="left:16px;top:574px;width:767px;height:1px;background:#8e8e8e;"></div>
<div class="a" style="left:16px;top:590px;width:767px;height:1px;background:#8e8e8e;"></div>
<div class="a" style="left:16px;top:606px;width:767px;height:1px;background:#8e8e8e;"></div>
<div class="a" style="left:16px;top:622px;width:767px;height:1px;background:#8e8e8e;"></div>
<div class="a" style="left:16px;top:638px;width:767px;height:1px;background:#8e8e8e;"></div>
<div class="a" style="left:16px;top:654px;width:767px;height:1px;background:#8e8e8e;"></div>
<div class="a" style="left:16px;top:670px;width:767px;height:1px;background:#8e8e8e;"></div>
<div class="a" style="left:111px;top:463px;width:1px;height:208px;background:#8e8e8e;"></div>
<div class="a" style="left:207px;top:463px;width:1px;height:208px;background:#8e8e8e;"></div>
<div class="a" style="left:303px;top:463px;width:1px;height:208px;background:#8e8e8e;"></div>
<div class="a" style="left:399px;top:463px;width:1px;height:208px;background:#8e8e8e;"></div>
<div class="a" style="left:495px;top:463px;width:1px;height:208px;background:#8e8e8e;"></div>
<div class="a" style="left:591px;top:463px;width:1px;height:208px;background:#8e8e8e;"></div>
<div class="a" style="left:687px;top:463px;width:1px;height:208px;background:#8e8e8e;"></div>
<div class="a" style="left:5px;top:706px;width:790px;height:1px;background:#ffffff;"></div>
<div class="a" style="left:7px;top:708px;width:638px;height:1px;background:#606060;"></div>
<div class="a" style="left:7px;top:708px;width:1px;height:23px;background:#606060;"></div>
<div class="a" style="left:5px;top:706px;width:1px;height:26px;background:#ffffff;"></div>
<div class="a" style="left:7px;top:731px;width:639px;height:1px;background:#ffffff;"></div>
<div class="a" style="left:645px;top:708px;width:1px;height:24px;background:#ffffff;"></div>
<div class="a t b" style="left:12px;top:714px;color:#10108c;letter-spacing:-0.1px">Elaborating...</div>
<div class="a" style="left:647px;top:708px;width:147px;height:1px;background:#7a7a7a;"></div>
<div class="a" style="left:647px;top:708px;width:1px;height:23px;background:#7a7a7a;"></div>
<div class="a" style="left:647px;top:730px;width:147px;height:1px;background:#ffffff;"></div>
<div class="a" style="left:793px;top:707px;width:1px;height:24px;background:#ffffff;"></div>
<div class="a" style="left:680px;top:709px;width:24px;height:21px;background:#9a9ac8;"></div>
<div class="a" style="left:390px;top:347px;width:378px;height:168px;background:#7e7ad8;border-radius:4px 4px 0 0"></div>
<div class="a" style="left:391px;top:348px;width:376px;height:28px;background:linear-gradient(#88a2ea 0px,#7896e2 4px,#6e8cdc 9px,#7090dc 14px,#78a0e6 20px,#7c9ce8 26px,#8098e0 28px);border-radius:3px 3px 0 0"></div>
<div class="a dtitle">SOCS Demo - Version 0.1.00_1234</div>
<div class="a" style="left:744px;top:352px;width:19px;height:19px;background:linear-gradient(#b88098,#a06a80);border:1px solid #c0a8d0;border-radius:2px"></div>
<svg class="a" style="left:744px;top:352px" width="19" height="19"><path d="M5 5 L14 14 M14 5 L5 14" stroke="#fff" stroke-width="2"/></svg>
<div class="a" style="left:393px;top:376px;width:372px;height:136px;background:#c8c8e6;"></div>
<div class="a" style="left:396px;top:376px;width:364px;height:135px;background:#cacaca;"></div>
<div class="a" style="left:756px;top:376px;width:4px;height:135px;background:linear-gradient(90deg,#cacaca,#d0d0dc);"></div>
<svg class="a" style="left:400px;top:383px" width="90" height="90" viewBox="0 0 90 90">
<circle cx="43.7" cy="44" r="37.2" fill="#f2f200" stroke="#000" stroke-width="2.8"/>
<ellipse cx="30.2" cy="31.5" rx="6.8" ry="9.2" fill="#050510"/>
<ellipse cx="57.2" cy="31.5" rx="6.8" ry="9.2" fill="#050510"/>
<ellipse cx="31" cy="33" rx="1.6" ry="3.5" fill="#22226a"/>
<ellipse cx="58" cy="33" rx="1.6" ry="3.5" fill="#22226a"/>
<path d="M20 60 Q43.7 42 69 60" fill="none" stroke="#000" stroke-width="2.6"/>
<path d="M17 58 L21 64 M24 58 L20 64" stroke="#000" stroke-width="1.5"/>
<path d="M65 58 L69 64 M72 58 L68 64" stroke="#000" stroke-width="1.5"/>
</svg>
<div class="a t b" style="left:501px;top:410px;letter-spacing:-0.12px">The proof procedure has terminated.</div>
<div class="a t b" style="left:501px;top:429px;letter-spacing:-0.19px">All final nodes contain a violation (text in red).</div>
<div class="a" style="left:560px;top:475px;width:37px;height:1px;background:#666666;"></div>
<div class="a" style="left:560px;top:498px;width:37px;height:1px;background:#666666;"></div>
<div class="a" style="left:560px;top:475px;width:1px;height:24px;background:#666666;"></div>
<div class="a" style="left:596px;top:475px;width:1px;height:24px;background:#666666;"></div>
<div class="a" style="left:561px;top:476px;width:35px;height:1px;background:#666666;"></div>
<div class="a" style="left:561px;top:497px;width:35px;height:1px;background:#666666;"></div>
<div class="a" style="left:561px;top:476px;width:1px;height:22px;background:#666666;"></div>
<div class="a" style="left:595px;top:476px;width:1px;height:22px;background:#666666;"></div>
<div class="a" style="left:562px;top:477px;width:35px;height:1px;background:#ffffff;"></div>
<div class="a" style="left:562px;top:477px;width:1px;height:21px;background:#ffffff;"></div>
<div class="a" style="left:561px;top:499px;width:37px;height:1px;background:#ffffff;"></div>
<div class="a" style="left:597px;top:475px;width:1px;height:25px;background:#ffffff;"></div>
<div class="a t b" style="left:571px;top:482px;">OK</div>
</body></html>
